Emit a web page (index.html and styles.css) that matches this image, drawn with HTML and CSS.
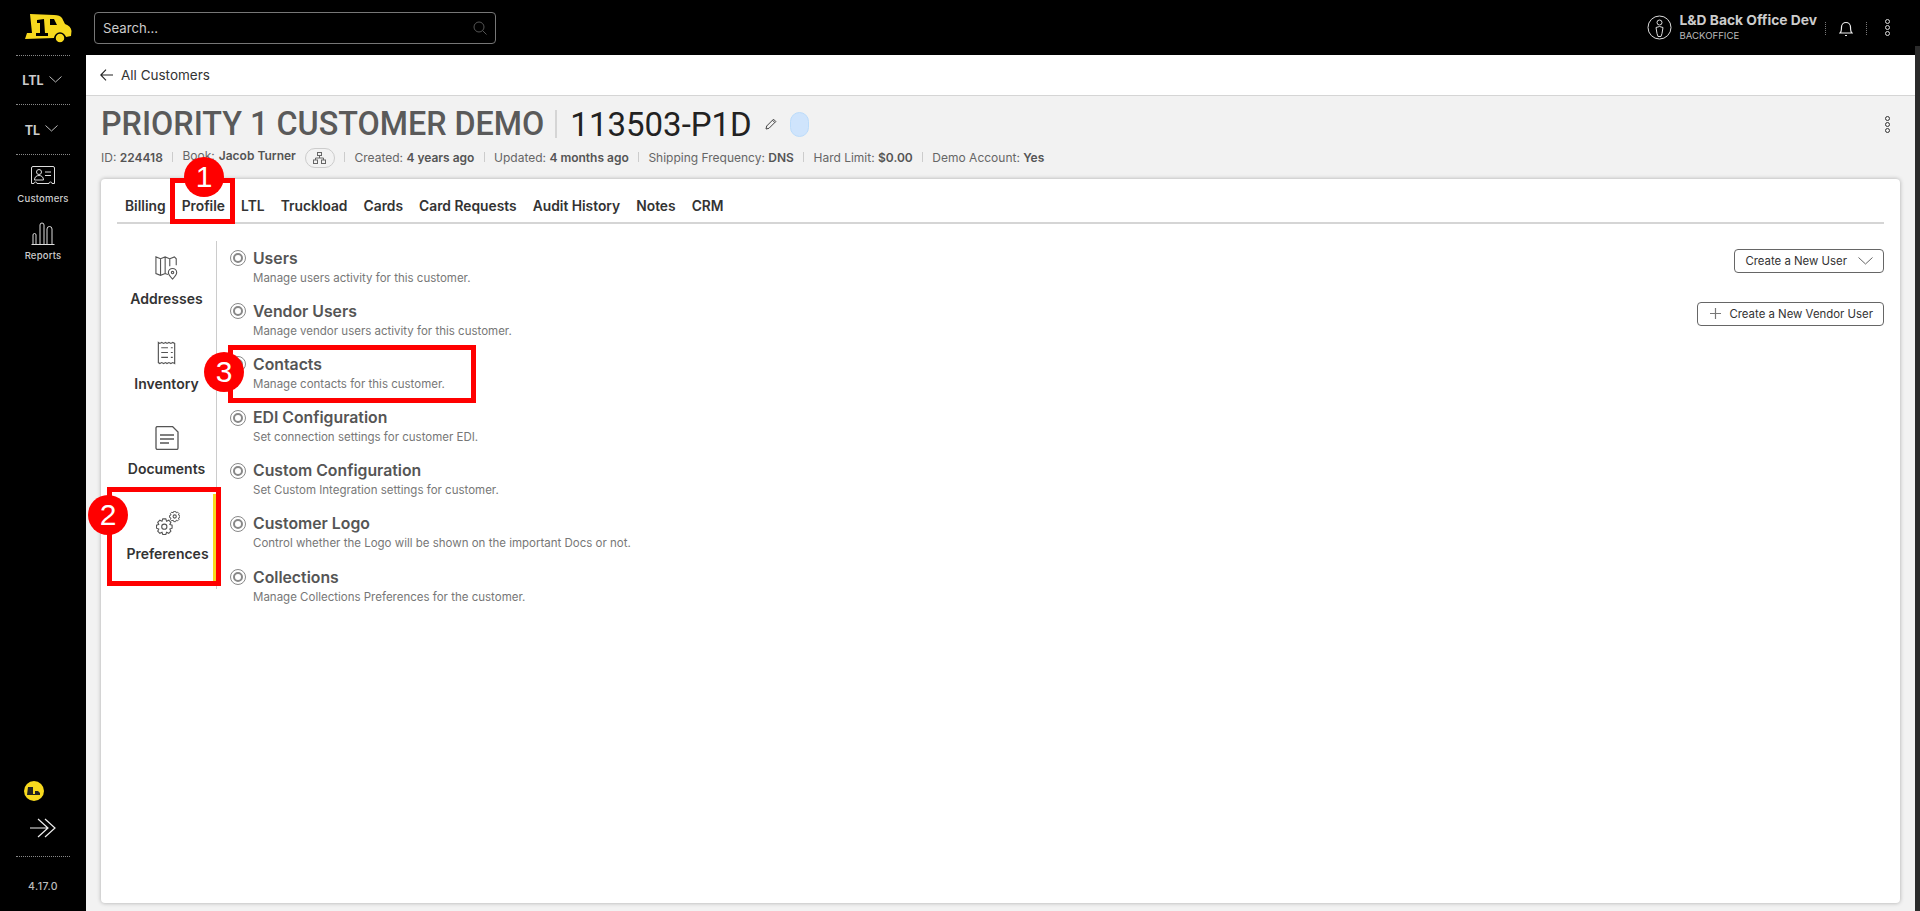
FILE: index.html
```html
<!DOCTYPE html>
<html lang="en">
<head>
  <meta charset="UTF-8">
  <meta name="viewport" content="width=device-width, initial-scale=1.0">
  <title>Customer Profile</title>
  <link rel="stylesheet" href="styles.css">
</head>
<body>
<div class="app">
  <aside class="sidebar">
    <div class="logo">
      <svg width="48" height="30" viewBox="0 0 48 30">
        <path fill="#f7d91e" d="M6 1 L30 2 Q36 2 38 5 L41 11 Q47 13 47.500 18 L47 23 L42 24 A6.500 6.500 0 0 0 30 25 L1 26 L3 20 L8 20 Z"/>
        <circle cx="36" cy="25" r="5" fill="#f7d91e" stroke="#000" stroke-width="1.500"/>
        <path fill="#000" d="M13 7 L20 6 L21 20 L24 20 L24 23 L12 23 L12 20 L16 20 L16 10 L13 10 Z M26 6 L30 6 L33 12 L26 12 Z"/>
      </svg>
    </div>
    <div class="side-menu">
      <span>LTL</span>
      <svg class="chev" width="13" height="7" viewBox="0 0 13 7"><path d="M.5.500l6 5.500 6-5.500" fill="none" stroke="#bbb"/></svg>
    </div>
    <div class="side-menu side-menu-tl">
      <span>TL</span>
      <svg class="chev" width="13" height="7" viewBox="0 0 13 7"><path d="M.5.500l6 5.500 6-5.500" fill="none" stroke="#bbb"/></svg>
    </div>
    <div class="side-links">
      <a class="side-link side-link-customers">
        <svg width="24" height="19" viewBox="0 0 24 19" fill="none" stroke="#ddd" stroke-width="1">
          <path d="M2 .5h20a1.500 1.500 0 0 1 1.500 1.500v15.500h-2.500a1.500 1.500 0 0 0-3 0h-12a1.500 1.500 0 0 0-3 0h-2.500v-15.500a1.500 1.500 0 0 1 1.500-1.500z"/>
          <circle cx="8" cy="6" r="2.500"/>
          <path d="M3.500 14c0-3 2-4.500 4.500-4.500s4.500 1.500 4.500 4.500z"/>
          <path d="M14 6h6M14 9.500h6"/>
        </svg>
        <span>Customers</span>
      </a>
      <a class="side-link">
        <svg width="24" height="23" viewBox="0 0 24 23" fill="none" stroke="#ddd" stroke-width="1">
          <path d="M.5 22.500h23"/>
          <path d="M2 22v-9a1.500 1.500 0 0 1 3 0v9M9 22v-19a2 2 0 0 1 4 0v19M16 22v-15a2.500 2.500 0 0 1 5 0v15"/>
        </svg>
        <span>Reports</span>
      </a>
    </div>
    <div class="side-bottom">
      <div class="coin">
        <svg width="14" height="9" viewBox="0 0 14 9"><path d="M1 0h5v7h2V4h3l2 2v2H0z" fill="#222"/></svg>
      </div>
      <svg class="expand" width="26" height="20" viewBox="0 0 26 20" fill="none" stroke="#eee" stroke-width="1.200">
        <path d="M0 10h18M8 1l10 9-10 9M15 1l10 9-10 9"/>
      </svg>
      <div class="version">4.17.0</div>
    </div>
  </aside>

  <div class="main">
    <header class="topbar">
      <div class="search">
        <span>Search...</span>
        <svg width="14" height="14" viewBox="0 0 14 14" fill="none" stroke="#555"><circle cx="6" cy="6" r="5"/><path d="M9.500 9.500l4 4"/></svg>
      </div>
      <div class="user">
        <svg width="25" height="25" viewBox="0 0 25 25" fill="none" stroke="#ddd">
          <circle cx="12.500" cy="12.500" r="11.500"/>
          <circle cx="12.500" cy="7.500" r="2.500"/>
          <path d="M9 12.500q3.500-2 7 0l-1 6-1 3h-3l-1-3z"/>
        </svg>
        <div class="user-text">
          <b>L&amp;D Back Office Dev</b>
          <small>BACKOFFICE</small>
        </div>
        <i class="dots-sep"></i>
        <svg class="bell" width="14" height="16" viewBox="0 0 14 16" fill="none" stroke="#eee" stroke-width="1.200">
          <path d="M1 13c1.500-1 1.500-3 1.500-6a4.500 4.500 0 0 1 9 0c0 3 0 5 1.500 6z"/>
          <path d="M6 15.500h2"/>
        </svg>
        <i class="dots-sep"></i>
        <span class="kebab kebab-light"><i></i><i></i><i></i></span>
      </div>
    </header>

    <div class="crumb">
      <svg width="13" height="12" viewBox="0 0 13 12" fill="none" stroke="#222" stroke-width="1.100"><path d="M13 6H1M6 .7L.8 6 6 11.300"/></svg>
      <span>All Customers</span>
    </div>

    <section class="customer">
      <div class="title-row">
        <h1>PRIORITY 1 CUSTOMER DEMO</h1>
        <i class="title-sep"></i>
        <span class="code">113503-P1D</span>
        <svg class="pencil" width="12" height="12" viewBox="0 0 12 12" fill="none" stroke="#444"><path d="M1 11l.7-3L8.500 1.200l2.300 2.300L4 10.300zM7.500 2.200l2.300 2.300"/></svg>
        <span class="pill"></span>
        <span class="kebab kebab-dark"><i></i><i></i><i></i></span>
      </div>
      <div class="meta">
        <span>ID: <b>224418</b></span><i></i>
        <span class="book">Book: <b>Jacob Turner</b>
          <em class="org">
            <svg width="13" height="12" viewBox="0 0 13 12" fill="none" stroke="#666"><rect x="4.500" y=".5" width="4" height="3"/><rect x=".5" y="8" width="4" height="3.500"/><rect x="8.500" y="8" width="4" height="3.500"/><path d="M6.500 3.500v2.500M2.500 8V6h8v2"/></svg>
          </em>
        </span><i></i>
        <span>Created: <b>4 years ago</b></span><i></i>
        <span>Updated: <b>4 months ago</b></span><i></i>
        <span>Shipping Frequency: <b>DNS</b></span><i></i>
        <span>Hard Limit: <b>$0.00</b></span><i></i>
        <span>Demo Account: <b>Yes</b></span>
      </div>
    </section>

    <section class="card">
      <nav class="tabs">
        <a>Billing</a><a>Profile</a><a>LTL</a><a>Truckload</a><a>Cards</a><a>Card Requests</a><a>Audit History</a><a>Notes</a><a>CRM</a>
      </nav>
      <div class="card-body">
        <div class="subnav">
          <a class="subnav-item">
            <svg width="24" height="24" viewBox="0 0 26 26" fill="none" stroke="#555" stroke-width="1.200">
              <path d="M16 11V3l-5-2-5 2-5-2v18l5 2 5-2 3 1M6 3v18M11 1v18M16 3l5-2 2 2v7"/>
              <path d="M19 25c-3-3-4.500-5-4.500-7a4.500 4.500 0 0 1 9 0c0 2-1.500 4-4.500 7z" fill="#fff"/>
              <circle cx="19" cy="18" r="1.300"/>
            </svg>
            <span>Addresses</span>
          </a>
          <a class="subnav-item">
            <svg width="20" height="24" viewBox="0 0 20 25" fill="none" stroke="#555" stroke-width="1.200">
              <path d="M1 1.500l1.500 1 2-1 2 1 2-1 1.500 1 2-1 2 1 2-1 2 1v21l-2-1-2 1-2-1-2 1-1.500-1-2 1-2-1-2 1-1.500-1z"/>
              <path d="M4 7h7M14 7h2M4 12h7M14 12h2M4 17h7M14 17h2"/>
            </svg>
            <span>Inventory</span>
          </a>
          <a class="subnav-item">
            <svg width="24" height="24" viewBox="0 0 24 24" fill="none" stroke="#555" stroke-width="1.300">
              <path d="M1 2a1.500 1.500 0 0 1 1.500-1.500h15l5.500 5.500v16a1.500 1.500 0 0 1-1.500 1.500h-19a1.500 1.500 0 0 1-1.500-1.500z"/>
              <path d="M5 9h14M5 13h14M5 17h9"/>
            </svg>
            <span>Documents</span>
          </a>
          <a class="subnav-item subnav-active">
            <svg width="24" height="24" viewBox="0 0 24 24" fill="none" stroke="#555" stroke-width="1.100">
              <defs>
                <path id="gear" d="M-2.300-5.550L-1.500-7.800 1.500-7.800 2.300-5.550 4.450-6.570 6.570-4.450 5.550-2.300 7.800-1.500 7.800 1.500 5.550 2.300 6.570 4.450 4.450 6.570 2.300 5.550 1.500 7.800-1.500 7.800-2.300 5.550-4.450 6.570-6.570 4.450-5.550 2.300-7.800 1.500-7.800-1.500-5.550-2.300-6.570-4.450-4.450-6.570z"/>
              </defs>
              <use href="#gear" transform="translate(8.300 15.700)"/>
              <circle cx="8.300" cy="15.700" r="2.600"/>
              <use href="#gear" transform="translate(18.700 5.500) scale(.66)" stroke-width="1.500"/>
              <circle cx="18.700" cy="5.500" r="1.600"/>
            </svg>
            <span>Preferences</span>
          </a>
        </div>
        <div class="options">
          <div class="option">
            <span class="radio"></span>
            <div class="option-text"><h3>Users</h3><p>Manage users activity for this customer.</p></div>
            <button class="btn">Create a New User
              <svg class="btn-chev" width="15" height="8" viewBox="0 0 15 8"><path d="M.5.500l7 6.500 7-6.500" fill="none" stroke="#666"/></svg>
            </button>
          </div>
          <div class="option">
            <span class="radio"></span>
            <div class="option-text"><h3>Vendor Users</h3><p>Manage vendor users activity for this customer.</p></div>
            <button class="btn">
              <svg class="btn-plus" width="11" height="11" viewBox="0 0 11 11"><path d="M5.500 0v11M0 5.500h11" stroke="#777" stroke-width="1.200"/></svg>
              Create a New Vendor User
            </button>
          </div>
          <div class="option">
            <span class="radio"></span>
            <div class="option-text"><h3>Contacts</h3><p>Manage contacts for this customer.</p></div>
          </div>
          <div class="option">
            <span class="radio"></span>
            <div class="option-text"><h3>EDI Configuration</h3><p>Set connection settings for customer EDI.</p></div>
          </div>
          <div class="option">
            <span class="radio"></span>
            <div class="option-text"><h3>Custom Configuration</h3><p>Set Custom Integration settings for customer.</p></div>
          </div>
          <div class="option">
            <span class="radio"></span>
            <div class="option-text"><h3>Customer Logo</h3><p>Control whether the Logo will be shown on the important Docs or not.</p></div>
          </div>
          <div class="option">
            <span class="radio"></span>
            <div class="option-text"><h3>Collections</h3><p>Manage Collections Preferences for the customer.</p></div>
          </div>
        </div>
      </div>
    </section>
  </div>
  <div class="scrollbar"></div>
</div>

<!-- tutorial callouts drawn over the screenshot -->
<div class="mark mark-1"></div>
<div class="mark mark-2"></div>
<div class="mark mark-3"></div>
<div class="badge badge-1">1</div>
<div class="badge badge-2">2</div>
<div class="badge badge-3">3</div>
</body>
</html>
```

FILE: styles.css
```css
* {
  box-sizing: border-box;
}
html, body {
  margin: 0;
  height: 911px;
  overflow: hidden;
}
body {
  font-family: Inter, "Liberation Sans", sans-serif;
  background: #f2f2f2;
  color: #333;
  position: relative;
}
.app {
  display: flex;
  height: 911px;
}

/* left rail */
.sidebar {
  width: 86px;
  flex: none;
  background: #000;
  display: flex;
  flex-direction: column;
  align-items: center;
  color: #ccc;
}
.logo {
  height: 55px;
  width: 100%;
  padding: 13px 0 0 24px;
}
.side-menu {
  width: 54px;
  height: 49px;
  border-top: 1px dotted #888;
  display: flex;
  align-items: center;
  justify-content: center;
  gap: 5px;
  font-size: 12.500px;
  font-weight: 700;
  padding: 1px 2px 0 0;
}
.side-menu .chev {
  margin-top: -3px;
}
.side-menu-tl {
  height: 50px;
  padding-right: 3px;
}
.side-links {
  width: 54px;
  border-top: 1px dotted #888;
  display: flex;
  flex-direction: column;
  align-items: center;
  padding-top: 11px;
  gap: 18px;
}
.side-link {
  display: flex;
  flex-direction: column;
  align-items: center;
  gap: 5px;
  font-size: 9.500px;
  font-weight: 500;
  letter-spacing: .2px;
}
.side-link-customers {
  gap: 8px;
}
.side-bottom {
  margin-top: auto;
  width: 54px;
  display: flex;
  flex-direction: column;
  align-items: center;
  padding-bottom: 18px;
}
.coin {
  width: 20px;
  height: 20px;
  border-radius: 50%;
  background: #f7d91e;
  margin-left: -18px;
  display: flex;
  align-items: center;
  justify-content: center;
}
.expand {
  margin-top: 17px;
  display: block;
}
.version {
  width: 100%;
  border-top: 1px dotted #888;
  margin-top: 18px;
  padding-top: 24px;
  text-align: center;
  font-size: 10.500px;
  line-height: 12px;
  font-weight: 500;
  letter-spacing: .4px;
  color: #bbb;
}

/* main column */
.main {
  flex: 1;
  min-width: 0;
  display: flex;
  flex-direction: column;
}
.topbar {
  height: 55px;
  flex: none;
  background: #000;
  display: flex;
  align-items: center;
  justify-content: space-between;
  padding: 0 25px 0 8px;
}
.search {
  width: 402px;
  height: 32px;
  margin-top: 1px;
  border: 1px solid #777;
  border-radius: 4px;
  display: flex;
  align-items: center;
  justify-content: space-between;
  padding: 0 8px;
  font-size: 13.200px;
  color: #ccc;
}
.user {
  display: flex;
  align-items: center;
  color: #ddd;
}
.user-text {
  margin-left: 7px;
  display: flex;
  flex-direction: column;
}
.user-text b {
  font-size: 13.800px;
  font-weight: 700;
  line-height: 16px;
  color: #ccc;
  margin-top: -2px;
}
.user-text small {
  font-size: 9.600px;
  line-height: 12px;
  color: #bbb;
  margin-top: 2px;
}
.dots-sep {
  width: 1px;
  height: 13px;
  border-left: 1px dotted #777;
  margin: 2px 13px 0 8px;
}
.bell {
  margin-right: 13px;
}
.bell + .dots-sep {
  margin: 2px 18px 0 0;
}
.kebab {
  display: flex;
  flex-direction: column;
  gap: 1px;
}
.kebab i {
  width: 5px;
  height: 5px;
  border-radius: 50%;
  border: 1px solid #333;
}
.kebab-light i {
  border-color: #ddd;
}
.crumb {
  height: 41px;
  flex: none;
  background: #fff;
  border-bottom: 1px solid #d5d5d5;
  display: flex;
  align-items: center;
  gap: 8px;
  padding: 0 0 0 14px;
  font-size: 13.500px;
  color: #333;
}
.customer {
  padding: 7px 25px 0 15px;
  height: 83px;
  flex: none;
}
.title-row {
  display: flex;
  align-items: center;
  height: 42px;
}
h1 {
  margin: 0;
  font-family: Roboto, sans-serif;
  font-size: 32.300px;
  font-weight: 500;
  color: #5a5a5a;
  white-space: nowrap;
}
.title-sep {
  width: 2px;
  height: 28px;
  background: #d5d5d5;
  margin: 0 13px 0 11px;
}
.code {
  font-family: Roboto, sans-serif;
  font-size: 33px;
  color: #222;
}
.pencil {
  margin-left: 13px;
}
.pill {
  width: 19px;
  height: 25px;
  border-radius: 9.500px;
  margin-left: 13px;
  background: #cfe4fc;
  border: 1px solid #bcdcfb;
}
.kebab-dark {
  margin-left: auto;
}
.meta {
  display: flex;
  align-items: center;
  height: 20px;
  margin-top: 2px;
  font-size: 12px;
  color: #666;
  white-space: nowrap;
}
.meta b {
  font-weight: 600;
  color: #555;
}
.meta > i {
  width: 1px;
  height: 10px;
  background: #ccc;
  margin: 0 9.300px;
}
.book {
  display: flex;
  align-items: center;
  gap: 4px;
  margin-top: -3px;
}
.org {
  width: 30px;
  height: 20px;
  border: 1px solid #ccc;
  border-radius: 10px;
  margin-left: 5px;
  display: flex;
  align-items: center;
  justify-content: center;
  margin-top: 4px;
}

/* card */
.card {
  flex: 1;
  margin: 0 15px 8px 15px;
  background: #fff;
  border-radius: 4px;
  box-shadow: 0 0 4px rgba(0, 0, 0, .3);
  padding: 0 16px;
  display: flex;
  flex-direction: column;
  min-height: 0;
}
.tabs {
  display: flex;
  height: 45px;
  flex: none;
  align-items: center;
  gap: 16.100px;
  padding: 10px 8px 0;
  border-bottom: 2px solid #d5d5d5;
  font-size: 13.800px;
  font-weight: 600;
  color: #333;
}
.card-body {
  display: flex;
  margin-left: -16px;
  padding-top: 17px;
}
.subnav {
  width: 116px;
  flex: none;
  border-right: 1px solid #ccc;
  height: 348px;
  padding-left: 16px;
}
.subnav-item {
  display: flex;
  flex-direction: column;
  align-items: center;
  height: 85px;
  font-size: 14px;
  font-weight: 600;
  color: #333;
  padding-top: 15px;
}
.subnav-item svg {
  height: 24px;
  margin-bottom: 10px;
}
.subnav-item span {
  line-height: 17px;
}
.subnav-active {
  border-right: 3px solid #f7d91e;
  height: 88px;
  margin-top: -2px;
  padding: 17px 0 0 5px;
}
.options {
  flex: 1;
  padding-left: 13px;
  padding-top: 9px;
}
.option {
  display: flex;
  height: 53.200px;
  position: relative;
}
.radio {
  width: 16px;
  height: 16px;
  margin: 0 7px 0 0;
  border-radius: 50%;
  border: 1px solid #888;
  flex: none;
  position: relative;
}
.radio::after {
  content: "";
  position: absolute;
  inset: 2px;
  border-radius: 50%;
  border: 2px solid #888;
}
.option-text {
  flex: 1;
}
h3 {
  margin: -1.500px 0 0;
  font-size: 15.800px;
  line-height: 20px;
  font-weight: 600;
  color: #555;
}
p {
  margin: 2px 0 0;
  font-size: 11.500px;
  line-height: 15px;
  color: #777;
}
.btn {
  height: 24px;
  margin: -1.500px 0 0;
  padding: 0 10px;
  background: #fff;
  border: 1px solid #666;
  border-radius: 4px;
  display: flex;
  align-items: center;
  font-family: inherit;
  font-size: 11.400px;
  color: #333;
}
.btn-chev {
  margin-left: 11px;
}
.btn-plus {
  margin: 0 8px 0 2px;
}
.scrollbar {
  width: 5px;
  flex: none;
  background: linear-gradient(#000 46px, #2b2b2b 46px);
}

/* callouts */
.mark {
  position: absolute;
  border: 5px solid #f00;
}
.mark-1 {
  left: 170px;
  top: 178px;
  width: 65px;
  height: 46px;
}
.mark-2 {
  left: 107px;
  top: 487px;
  width: 114px;
  height: 99px;
}
.mark-3 {
  left: 228px;
  top: 345px;
  width: 248px;
  height: 58px;
}
.badge {
  position: absolute;
  width: 40px;
  height: 40px;
  border-radius: 50%;
  background: #f00;
  color: #fff;
  font-family: "Liberation Sans", sans-serif;
  font-size: 30px;
  line-height: 40px;
  text-align: center;
}
.badge-1 {
  left: 184px;
  top: 157px;
}
.badge-2 {
  left: 88px;
  top: 495px;
}
.badge-3 {
  left: 204px;
  top: 352px;
}
```
